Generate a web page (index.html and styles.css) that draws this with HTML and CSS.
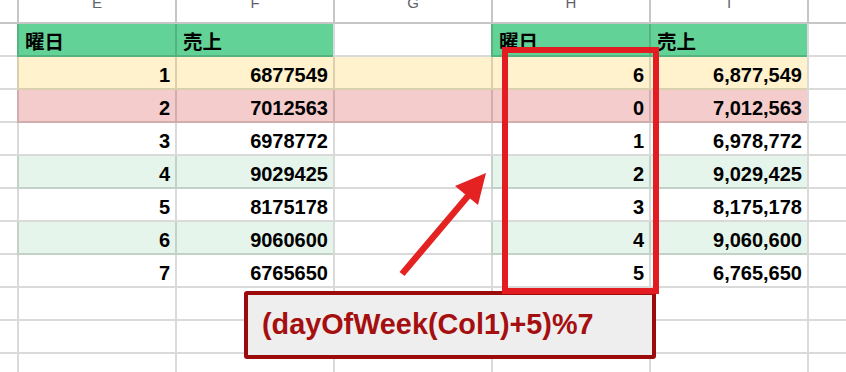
FILE: index.html
```html
<!DOCTYPE html>
<html lang="ja">
<head>
<meta charset="utf-8">
<link rel="stylesheet" href="styles.css">
</head>
<body>
<div class="page">
  <div class="sheet">
    <div class="row colhead">
      <div class="c stub"></div>
      <div class="c"><span class="letter">E</span></div>
      <div class="c"><span class="letter">F</span></div>
      <div class="c"><span class="letter">G</span></div>
      <div class="c"><span class="letter">H</span></div>
      <div class="c"><span class="letter">I</span></div>
      <div class="c"></div>
    </div>
    <div class="row">
      <div class="c stub"></div>
      <div class="c hd">曜日</div>
      <div class="c hd">売上</div>
      <div class="c"></div>
      <div class="c hd">曜日</div>
      <div class="c hd">売上</div>
      <div class="c"></div>
    </div>
    <div class="row">
      <div class="c stub"></div>
      <div class="c num yl">1</div>
      <div class="c num yl">6877549</div>
      <div class="c yl"></div>
      <div class="c num yl">6</div>
      <div class="c num yl">6,877,549</div>
      <div class="c"></div>
    </div>
    <div class="row">
      <div class="c stub"></div>
      <div class="c num pk">2</div>
      <div class="c num pk">7012563</div>
      <div class="c pk"></div>
      <div class="c num pk">0</div>
      <div class="c num pk">7,012,563</div>
      <div class="c"></div>
    </div>
    <div class="row">
      <div class="c stub"></div>
      <div class="c num">3</div>
      <div class="c num">6978772</div>
      <div class="c"></div>
      <div class="c num">1</div>
      <div class="c num">6,978,772</div>
      <div class="c"></div>
    </div>
    <div class="row">
      <div class="c stub"></div>
      <div class="c num lg">4</div>
      <div class="c num lg">9029425</div>
      <div class="c"></div>
      <div class="c num lg">2</div>
      <div class="c num lg">9,029,425</div>
      <div class="c"></div>
    </div>
    <div class="row">
      <div class="c stub"></div>
      <div class="c num">5</div>
      <div class="c num">8175178</div>
      <div class="c"></div>
      <div class="c num">3</div>
      <div class="c num">8,175,178</div>
      <div class="c"></div>
    </div>
    <div class="row">
      <div class="c stub"></div>
      <div class="c num lg">6</div>
      <div class="c num lg">9060600</div>
      <div class="c"></div>
      <div class="c num lg">4</div>
      <div class="c num lg">9,060,600</div>
      <div class="c"></div>
    </div>
    <div class="row">
      <div class="c stub"></div>
      <div class="c num">7</div>
      <div class="c num">6765650</div>
      <div class="c"></div>
      <div class="c num">5</div>
      <div class="c num">6,765,650</div>
      <div class="c"></div>
    </div>
    <div class="row">
      <div class="c stub"></div><div class="c"></div><div class="c"></div><div class="c"></div><div class="c"></div><div class="c"></div><div class="c"></div>
    </div>
    <div class="row">
      <div class="c stub"></div><div class="c"></div><div class="c"></div><div class="c"></div><div class="c"></div><div class="c"></div><div class="c"></div>
    </div>
    <div class="row">
      <div class="c stub"></div><div class="c"></div><div class="c"></div><div class="c"></div><div class="c"></div><div class="c"></div><div class="c"></div>
    </div>
  </div>

  <div class="formula">(dayOfWeek(Col1)+5)%7</div>
  <div class="highlight"></div>
  <svg class="arrow" width="846" height="372" viewBox="0 0 846 372">
    <line x1="402" y1="274" x2="468" y2="196" stroke="#e42222" stroke-width="6.5"/>
    <polygon points="486,173 455,186 478,205" fill="#e42222"/>
  </svg>
</div>
</body>
</html>
```

FILE: styles.css
```css
html, body {
  margin: 0;
  padding: 0;
  background: #ffffff;
}

.page {
  position: relative;
  width: 846px;
  height: 372px;
  overflow: hidden;
  font-family: "Liberation Sans", Arial, "Noto Sans CJK JP", sans-serif;
}

.sheet {
  display: flex;
  flex-direction: column;
}

.row {
  display: grid;
  grid-template-columns: 17px repeat(5, 158px) 1fr;
  height: 33px;
}

.c {
  box-sizing: border-box;
  border-left: 2px solid rgba(0, 0, 0, 0.145);
  border-bottom: 2px solid rgba(0, 0, 0, 0.145);
  display: flex;
  align-items: flex-end;
  padding: 0 5px 1px 7px;
  font-size: 20px;
  line-height: 23px;
  font-weight: bold;
  color: #000;
  overflow: hidden;
}

.c.stub {
  border-left: none;
}

.colhead {
  height: 24px;
}

.colhead .c {
  border-color: #c6c6c6;
  align-items: flex-start;
  justify-content: center;
  padding: 0;
  background: #fff;
}

.letter {
  font-size: 15px;
  line-height: 15px;
  font-weight: normal;
  color: #5f6368;
  margin-top: -5px;
}

.hd {
  background: #63d297;
  font-family: "Liberation Sans", "Noto Sans CJK JP", sans-serif;
  font-size: 19.5px;
  padding-left: 6px;
}

.num {
  justify-content: flex-end;
}

.yl {
  background: #fff2cc;
}

.pk {
  background: #f4cccc;
}

.lg {
  background: #e6f5ec;
}

.formula {
  position: absolute;
  left: 244px;
  top: 291px;
  width: 412px;
  height: 68px;
  box-sizing: border-box;
  border: 4px solid #9b0b0b;
  border-radius: 3px;
  background: #eeeeee;
  display: flex;
  align-items: center;
  padding-left: 14px;
  padding-bottom: 2px;
  font-size: 28.8px;
  font-weight: bold;
  color: #a50f0f;
}

.highlight {
  position: absolute;
  left: 502px;
  top: 47px;
  width: 157px;
  height: 247px;
  box-sizing: border-box;
  border: 6px solid #e31c22;
}

.arrow {
  position: absolute;
  left: 0;
  top: 0;
}
```
